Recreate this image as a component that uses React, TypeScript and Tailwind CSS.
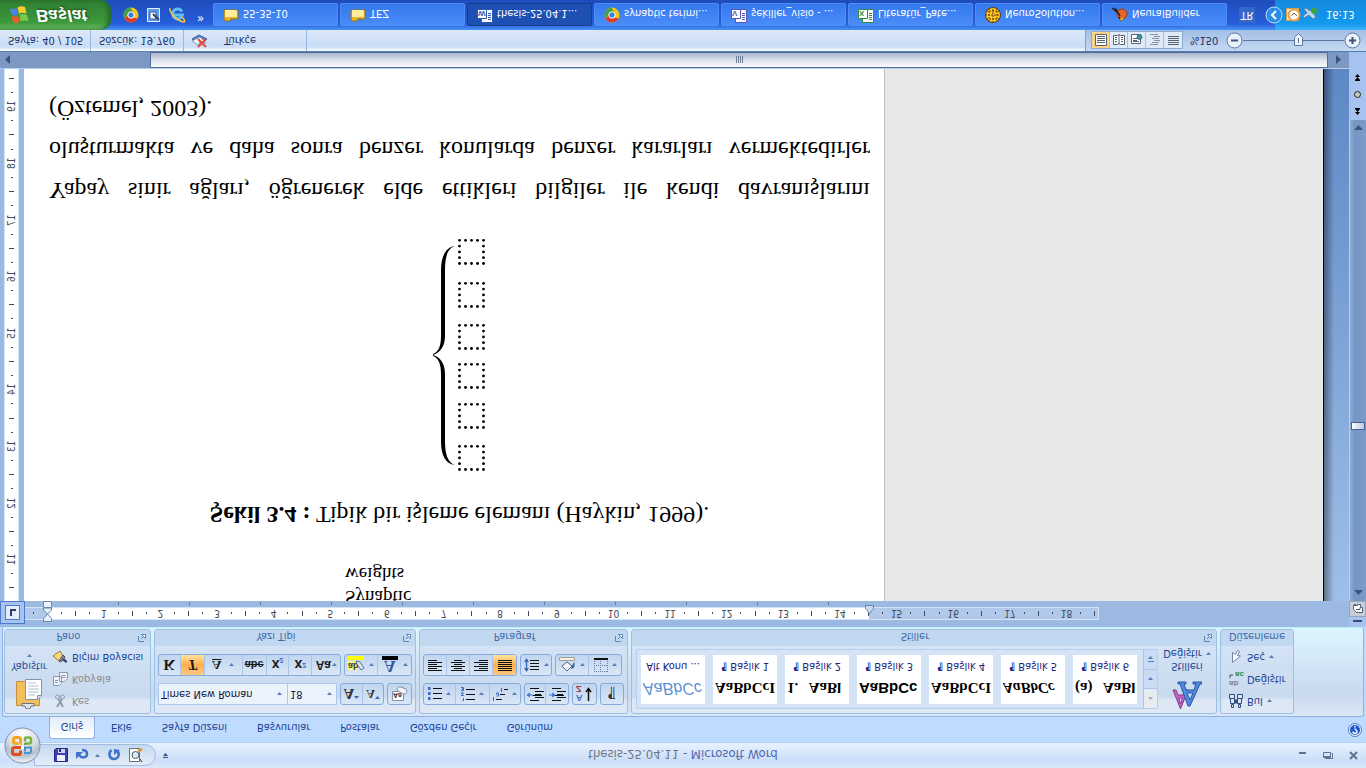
import React from 'react';

const GALLERY = [
  { label: 'Alt Konu ...', preview: 'AaBbCc', style: 'font-["Liberation_Sans"] italic text-[#5b8fd0] text-base' },
  { label: '¶ Başlık 1', preview: 'AaBbCcI', style: 'font-["Liberation_Serif"] font-bold text-[15px]' },
  { label: '¶ Başlık 2', preview: '1.   AaBl', style: 'font-["Liberation_Serif"] font-bold text-[15px]' },
  { label: '¶ Başlık 3', preview: 'AaBbCc', style: 'font-["Liberation_Sans"] font-bold text-[15px]' },
  { label: '¶ Başlık 4', preview: 'AaBbCcI', style: 'font-["Liberation_Serif"] font-bold text-[15px]' },
  { label: '¶ Başlık 5', preview: 'AaBbCc', style: 'font-["Liberation_Serif"] font-bold italic text-[15px]' },
  { label: '¶ Başlık 6', preview: '(a)   AaBl', style: 'font-["Liberation_Serif"] font-bold text-[15px]' },
];

const TABS = ['Ekle', 'Sayfa Düzeni', 'Başvurular', 'Postalar', 'Gözden Geçir', 'Görünüm'];

function Caret({ up = false, color = '#5b7fb8' }: { up?: boolean; color?: string }) {
  return (
    <svg width="5" height="3" viewBox="0 0 5 3" className="shrink-0">
      <path d={up ? 'M0 3h5L2.5 0z' : 'M0 0h5L2.5 3z'} fill={color} />
    </svg>
  );
}

function Segment({ children }: { children: React.ReactNode }) {
  return (
    <div className="flex h-[22px] divide-x divide-[#a9c5e8] overflow-hidden rounded-[3px] border border-[#86abdb] bg-linear-to-b from-[#d9e7f7] to-[#c0d5ef]">
      {children}
    </div>
  );
}

function Tool({ label, width = 'w-[23px]', active = false, caret = false, children }: {
  label: string; width?: string; active?: boolean; caret?: boolean; children: React.ReactNode;
}) {
  return (
    <button
      aria-label={label}
      className={`flex h-full items-center justify-center gap-1 ${width} ${active ? 'bg-linear-to-b from-[#fdc982] via-[#ffae4e] to-[#fde59b]' : ''}`}
    >
      {children}
      {caret && <Caret />}
    </button>
  );
}

function Group({ title, launcher = true, className = '', children }: {
  title: string; launcher?: boolean; className?: string; children: React.ReactNode;
}) {
  return (
    <section className={`flex h-[85px] shrink-0 flex-col overflow-hidden rounded-[3px] border border-[#9dbfe0] bg-linear-to-b from-[#dee8f5] from-15% via-[#c9daef] via-20% to-[#d7e6f7] ${className}`}>
      <div className="flex-1">{children}</div>
      <div className="flex h-[16px] items-center bg-[#c1d8f0] px-1 text-[#3e6aaa]">
        <span className={`flex-1 pt-[3px] text-center ${launcher ? 'pr-[10px]' : ''}`}>{title}</span>
        {launcher && (
          <button aria-label={`${title} ayarları`}>
            <svg width="8" height="8" viewBox="0 0 8 8" fill="none" stroke="#5c86b8">
              <path d="M.5 6V.5H6" />
              <path d="M7.5 3.5v4h-4zM3 3l3 3" fill="#fff" />
            </svg>
          </button>
        )}
      </div>
    </section>
  );
}

// Horizontal lines used by the alignment and list buttons
function Lines({ rows }: { rows: number[][] }) {
  return (
    <svg width="16" height="14" viewBox="0 0 16 14" shapeRendering="crispEdges">
      {rows.map(([x, w], i) => <rect key={i} x={x} y={1 + i * 2} width={w} height="1" fill="#111" />)}
    </svg>
  );
}

function OfficeOrb() {
  return (
    <button aria-label="Office Düğmesi" className="absolute left-1 top-1 z-10">
      <svg width="37" height="37" viewBox="0 0 37 37">
        <defs>
          <radialGradient id="orb" cx="50%" cy="85%" r="85%">
            <stop offset="0" stopColor="#fff" />
            <stop offset=".55" stopColor="#d5dbe4" />
            <stop offset=".75" stopColor="#b5bfcd" />
            <stop offset="1" stopColor="#f4f7fb" />
          </radialGradient>
        </defs>
        <circle cx="18.500" cy="18.500" r="17.500" fill="url(#orb)" stroke="#7d8fa8" />
        <g fill="none" strokeWidth="3">
          <path d="M17 16.500h-6.500a2 2 0 0 1-2-2v-3a2 2 0 0 1 2-2h4a2 2 0 0 1 2 2v2" stroke="#e0501c" />
          <path d="M20 11h5a2 2 0 0 1 2 2v3.500h-6v-4" stroke="#4a94cf" strokeWidth="2" />
          <path d="M16.500 20.500v4a2 2 0 0 1-2 2h-3a2 2 0 0 1-2-2v-2a2 2 0 0 1 2-2h3" stroke="#f5a51f" />
          <path d="M21 20.500h4a2 2 0 0 1 2 2v2a2 2 0 0 1-2 2h-3a1 1 0 0 1-1-1v-3" stroke="#7fb342" strokeWidth="2.500" />
        </g>
        <path d="M17 15h3v3h-3z" fill="#fff" />
        <path d="M16 19h2v2h-2z" fill="#f0b030" />
        <path d="M20 19h2v2h-2z" fill="#68a43a" />
        <path d="M20 15h2v2h-2z" fill="#3f86c7" />
      </svg>
    </button>
  );
}

function TitleBar() {
  return (
    <header className="flex h-[26px] items-center border-b border-[#b1d0f5] bg-linear-to-b from-[#dbe9fb] via-[#cbdef7] via-30% to-[#e7f2ff]">
      <div className="ml-[34px] flex h-[22px] w-[122px] shrink-0 items-center rounded-r-full border border-[#a2bddf] bg-linear-to-b from-[#e3edf9] to-[#c6d9f1] pl-[19px]">
        <button aria-label="Kaydet">
          <svg width="14" height="14" viewBox="0 0 14 14">
            <path d="M.5.500h13v13H2l-1.500-1.500z" fill="#3e3fb5" stroke="#25267c" />
            <path d="M3 1h8v6H3z" fill="#eceffc" />
            <path d="M4 9h7v4H4z" fill="#cfd4ee" />
            <path d="M5 10h2v3H5z" fill="#25267c" />
          </svg>
        </button>
        <button aria-label="Geri Al" className="ml-[7px]">
          <svg width="14" height="14" viewBox="0 0 14 14" fill="none">
            <path d="M4 7c3-4 8-2.500 8 1 0 2.500-2 4-5 4" stroke="#4173c8" strokeWidth="2.500" />
            <path d="M1 3v7h7z" fill="#4173c8" />
          </svg>
        </button>
        <span className="ml-[6px]"><Caret /></span>
        <button aria-label="Yinele" className="ml-[7px]">
          <svg width="14" height="14" viewBox="0 0 14 14" fill="none">
            <path d="M4.500 12C1 9 2 3 7 3s6 6 3 8" stroke="#4173c8" strokeWidth="2.500" />
            <path d="M7 13V7l6 5z" fill="#4173c8" />
          </svg>
        </button>
        <button aria-label="Baskı Önizleme" className="ml-[7px]">
          <svg width="16" height="16" viewBox="0 0 16 16" fill="none">
            <path d="M1.500 1.500h10v13h-10z" fill="#fff" stroke="#6d6f79" />
            <circle cx="7.500" cy="8" r="3.500" fill="#d8e9f7" stroke="#51565f" />
            <path d="M10 12l4 2" stroke="#e0963c" strokeWidth="3" />
            <path d="M12 4l2-3" stroke="#403020" />
          </svg>
        </button>
      </div>
      <button aria-label="Hızlı Erişim" className="ml-[7px] flex flex-col items-center gap-px">
        <span className="h-px w-[5px] bg-[#31508a]" />
        <Caret color="#31508a" />
      </button>
      <h1 className="flex-1 pr-[100px] pt-[3px] text-center text-[13px] text-[#5468ac]">
        <span className="text-[#707684]">thesis-25.04.11</span> - Microsoft Word
      </h1>
      <div className="flex w-[68px] items-center gap-4 text-[#5c7394]">
        <button aria-label="Simge Durumuna Küçült">
          <svg width="9" height="9" viewBox="0 0 9 9"><path d="M1 6h7v2H1z" fill="currentColor" /></svg>
        </button>
        <button aria-label="Önceki Boyut">
          <svg width="10" height="9" viewBox="0 0 10 9" fill="none" stroke="currentColor"><path d="M2.500 2.500v-1h7v5h-1M.5 2.500h7v5h-7zM.5 3.500h7" /></svg>
        </button>
        <button aria-label="Kapat">
          <svg width="10" height="9" viewBox="0 0 10 9" stroke="currentColor" strokeWidth="2"><path d="M1 1l7 7M8 1L1 8" /></svg>
        </button>
      </div>
    </header>
  );
}

function RibbonTabs() {
  return (
    <nav className="flex h-[25px] items-end bg-[#bfdbff] pl-[49px] text-[#1c4494]">
      <button className="h-[22px] w-[46px] rounded-t-[3px] border border-b-0 border-[#8db2e3] bg-linear-to-b from-white to-[#e2ecf8] pt-[2px]">Giriş</button>
      <div className="flex flex-1 pl-px">
        {TABS.map(tab => <button key={tab} className="h-[22px] px-[15px] pt-[2px]">{tab}</button>)}
      </div>
      <button aria-label="Yardım" className="mr-1 mb-[6px]">
        <svg width="14" height="14" viewBox="0 0 14 14">
          <circle cx="7" cy="7" r="6.500" fill="#e8f3ff" stroke="#4a7dc8" />
          <circle cx="7" cy="7" r="5" fill="#1f57c8" />
          <path d="M5 5.500c0-2.500 4-2.500 4 0C9 7 7 7 7 8.500M7 9.500v1.500" stroke="#fff" strokeWidth="1.500" fill="none" />
        </svg>
      </button>
    </nav>
  );
}

function ClipboardGroup() {
  return (
    <Group title="Pano" className="w-[147px]">
      <div className="flex">
        <button className="flex w-[48px] flex-col items-center pt-1 text-[#2b4f96]">
          <svg width="28" height="31" viewBox="0 0 28 31">
            <path d="M1.500 3.500h23v24h-23z" fill="#f3bf5d" stroke="#c48f3a" />
            <path d="M7 5.500h12V3h-3a3 3 0 0 0-6 0H7z" fill="#dfe3ea" stroke="#6f7683" />
            <path d="M10.500 9.500h12l4 4v16h-16z" fill="#fff" stroke="#8292a8" />
            <path d="M22.500 9.500v4h4" fill="#d5dfee" stroke="#8292a8" />
            <path d="M13 14h7M13 17h11M13 20h11M13 23h11M13 26h8" stroke="#b2bfd0" />
          </svg>
          <span className="mt-[3px] leading-[18px]">Yapıştır</span>
          <Caret />
        </button>
        <div className="flex flex-col pt-px text-[#8d8d8d]">
          <button className="flex h-[22px] items-center gap-1">
            <svg width="15" height="14" viewBox="0 0 15 14" fill="none" stroke="#8c9bb2">
              <path d="M4 1l5 8M10 1L5.500 9" strokeWidth="2" />
              <circle cx="4.500" cy="11" r="2" /><circle cx="9.500" cy="11" r="2" />
            </svg>
            Kes
          </button>
          <button className="flex h-[22px] items-center gap-1">
            <svg width="15" height="14" viewBox="0 0 15 14" fill="#eef2f8" stroke="#8c9bb2">
              <path d="M.5.500h6l2 2v7h-8zM6.500 4.500h5l3 3v6h-8z" />
              <path d="M2 3.500h3M2 5.500h3M8.500 8.500h4M8.500 10.500h4" />
            </svg>
            Kopyala
          </button>
          <button className="flex h-[22px] items-center gap-1 text-[#1c4494]">
            <svg width="15" height="14" viewBox="0 0 15 14">
              <path d="M0 8l6-5 4 5-3 5z" fill="#f6dc79" stroke="#94793a" />
              <path d="M6 3l2-1 4 5-2 2z" fill="#8b8ba0" stroke="#4d4d60" />
              <path d="M9 4l4-3 1.500 1.500L11 6z" fill="#3f4270" />
            </svg>
            Biçim Boyacısı
          </button>
        </div>
      </div>
    </Group>
  );
}

function FontGroup() {
  return (
    <Group title="Yazı Tipi" className="w-[262px]">
      <div className="flex flex-col gap-[7px] px-[3px] pt-2">
        <div className="flex gap-[3px]">
          <div className="flex text-[#14143c]">
            <div className="relative">
              <select aria-label="Yazı tipi" className="h-[22px] w-[130px] appearance-none border border-[#abc7ec] bg-[#eaf2fb] pl-[2px]">
                <option>Times New Roman</option>
              </select>
              <span className="pointer-events-none absolute right-[6px] top-[10px]"><Caret /></span>
            </div>
            <div className="relative">
              <select aria-label="Yazı tipi boyutu" className="h-[22px] w-[49px] appearance-none border border-l-0 border-[#abc7ec] bg-[#eaf2fb] pl-[2px]">
                <option>18</option>
              </select>
              <span className="pointer-events-none absolute right-[5px] top-[10px]"><Caret /></span>
            </div>
          </div>
          <Segment>
            <Tool label="Yazı Tipini Büyüt" width="w-[22px]">
              <span className="font-['Liberation_Serif'] text-[15px] font-bold leading-4 text-[#333]">A</span>
              <span className="-ml-1 mb-2"><Caret up color="#3c68b0" /></span>
            </Tool>
            <Tool label="Yazı Tipini Küçült" width="w-[21px]">
              <span className="font-['Liberation_Serif'] text-xs font-bold leading-4 text-[#333]">A</span>
              <span className="-ml-1 mb-2"><Caret color="#3c68b0" /></span>
            </Tool>
          </Segment>
          <Segment>
            <Tool label="Biçimlendirmeyi Temizle">
              <svg width="18" height="18" viewBox="0 0 18 18">
                <path d="M1.500 2.500h11v9h-11z" fill="#fff" stroke="#8492ab" />
                <text x="2" y="10" fontSize="7" fontWeight="bold" fontFamily="Liberation Sans" fill="#334">Aa</text>
                <path d="M7 12l5-3c3-1 5 3 3 5l-5 2c-3 1-5-2-3-4z" fill="#eff2f7" stroke="#7c8aa6" />
              </svg>
            </Tool>
          </Segment>
        </div>
        <div className="flex gap-[3px] font-['Liberation_Serif'] text-[15px] font-bold leading-4 text-[#1a1a1a]">
          <Segment>
            <Tool label="Kalın" width="w-[22px]"><span>K</span></Tool>
            <Tool label="İtalik" width="w-6" active><span className="italic">T</span></Tool>
            <Tool label="Altı Çizili" width="w-[38px]" caret><span className="mr-1 text-[13px] underline">A</span></Tool>
            <Tool label="Üstü Çizili" width="w-6"><span className="font-['Liberation_Sans'] text-[11px] line-through">abe</span></Tool>
            <Tool label="Alt Simge"><span className="font-['Liberation_Sans'] text-sm">x<sub className="text-[7px] text-[#3c68c0]">2</sub></span></Tool>
            <Tool label="Üst Simge"><span className="font-['Liberation_Sans'] text-sm">x<sup className="text-[7px] text-[#3c68c0]">2</sup></span></Tool>
            <Tool label="Büyük/Küçük Harf" width="w-[28px]" caret><span className="-mr-[3px] font-['Liberation_Sans'] text-xs">Aa</span></Tool>
          </Segment>
          <Segment>
            <Tool label="Vurgu Rengi" width="w-[33px]" caret>
              <svg width="17" height="18" viewBox="0 0 17 18">
                <path d="M0 4h10v9H0z" fill="#fbf77a" />
                <text x="0" y="11" fontSize="9" fontWeight="bold" fontFamily="Liberation Sans" fill="#333">ab</text>
                <path d="M9 10l4-6 3 2-4 6-4 1z" fill="#dce6f5" stroke="#5b6f95" />
                <path d="M0 14h16v4H0z" fill="#ff0" />
              </svg>
            </Tool>
            <Tool label="Yazı Tipi Rengi" width="w-[33px]" caret>
              <svg width="17" height="18" viewBox="0 0 17 18">
                <text x="2" y="13" fontSize="16" fontWeight="bold" fontFamily="Liberation Serif" fill="#31599f">A</text>
                <path d="M0 14h16v4H0z" fill="#000" />
              </svg>
            </Tool>
          </Segment>
        </div>
      </div>
    </Group>
  );
}

function ParagraphGroup() {
  return (
    <Group title="Paragraf" className="w-[209px]">
      <div className="flex flex-col gap-[7px] px-[3px] pt-2">
        <div className="flex gap-[3px]">
          <Segment>
            <Tool label="Madde İşaretleri" width="w-[33px]" caret>
              <svg width="14" height="13" viewBox="0 0 14 13" stroke="#111"><path d="M5 1.500h9M5 6.500h9M5 11.500h9" /><path d="M0 1.500h2.500M0 6.500h2.500M0 11.500h2.500" stroke="#3c68c0" strokeWidth="3" /></svg>
            </Tool>
            <Tool label="Numaralandırma" width="w-[34px]" caret>
              <svg width="14" height="14" viewBox="0 0 14 14" stroke="#111"><path d="M5 1.500h9M5 6.500h9M5 11.500h9" /><path d="M1 0h1.500v3M0 5.500h2.500L0 8h3M0 10.500h2.500v1.500H1h1.500v1.500H0" stroke="#3c68c0" fill="none" /></svg>
            </Tool>
            <Tool label="Çok Düzeyli Liste" width="w-[31px]" caret>
              <svg width="16" height="14" viewBox="0 0 16 14" stroke="#111"><path d="M4 1.500h6M8 6.500h5M12 11.500h4" /><path d="M1.500 0v4M4.500 5h2v3h-2V6.500M9.500 9v4" stroke="#3c68c0" fill="none" /></svg>
            </Tool>
          </Segment>
          <Segment>
            {['Girintiyi Azalt', 'Girintiyi Artır'].map((label, i) => (
              <Tool key={label} label={label} width="w-[22px]">
                <svg width="17" height="14" viewBox="0 0 17 14" stroke="#111">
                  <path d="M3 .5h9M8 3.500h9M8 6.500h6M8 9.500h9M3 12.500h9M6 5.500h9" />
                  <path d={i ? 'M0 6h5M3 4l3 2-3 2' : 'M1 6h5M3 4L0 6l3 2'} stroke="#3c78d0" fill="#3c78d0" />
                </svg>
              </Tool>
            ))}
          </Segment>
          <Segment>
            <Tool label="Sırala">
              <svg width="16" height="18" viewBox="0 0 16 18" fill="none">
                <text x="0" y="8" fontSize="9" fontWeight="bold" fontFamily="Liberation Sans" fill="#3c68c0">A</text>
                <text x="0" y="17" fontSize="9" fontWeight="bold" fontFamily="Liberation Sans" fill="#a03848">Z</text>
                <path d="M12.500 2v12M10 11l2.500 3.500L15 11" stroke="#111" strokeWidth="1.500" />
              </svg>
            </Tool>
          </Segment>
          <Segment>
            <Tool label="Tümünü Göster"><span className="font-['Liberation_Sans'] text-[15px] leading-4 text-[#333]">¶</span></Tool>
          </Segment>
        </div>
        <div className="flex gap-[3px]">
          <Segment>
            <Tool label="Sola Hizala"><Lines rows={[[1, 14], [1, 9], [1, 14], [1, 9], [1, 14], [1, 9]]} /></Tool>
            <Tool label="Ortala"><Lines rows={[[1, 14], [4, 8], [1, 14], [4, 8], [1, 14], [4, 8]]} /></Tool>
            <Tool label="Sağa Hizala"><Lines rows={[[1, 14], [6, 9], [1, 14], [6, 9], [1, 14], [6, 9]]} /></Tool>
            <Tool label="İki Yana Yasla" active><Lines rows={[[1, 14], [1, 14], [1, 14], [1, 14], [1, 14], [1, 14]]} /></Tool>
          </Segment>
          <Segment>
            <Tool label="Satır Aralığı" width="w-[30px]" caret>
              <svg width="16" height="16" viewBox="0 0 16 16"><path d="M6 3.500h9M6 6.500h9M6 9.500h9M6 12.500h9" stroke="#111" /><path d="M2.500 2v12" stroke="#3c68c0" strokeWidth="1.500" /><path d="M0 5l2.500-4L5 5zM0 11l2.500 4L5 11z" fill="#3c68c0" /></svg>
            </Tool>
          </Segment>
          <Segment>
            <Tool label="Gölgelendirme" width="w-[33px]" caret>
              <svg width="17" height="16" viewBox="0 0 17 16"><path d="M3 7l5-5 5 5-5 4z" fill="#f3f6fb" stroke="#56688a" /><path d="M12 4c4 1 4 4 3 7l-2-4z" fill="#2f5ea8" /><path d="M.5 12.500h15v3H.5z" fill="#f5f1e4" stroke="#a39f90" /></svg>
            </Tool>
            <Tool label="Kenarlıklar" width="w-[32px]" caret>
              <svg width="14" height="14" viewBox="0 0 14 14" stroke="#6d7ea0" strokeDasharray="1 1"><path d="M.5 0v13M13.500 0v13M6.500 0v13M0 .5h14M0 6.500h14" /><path d="M0 13h14" stroke="#111" strokeWidth="2" strokeDasharray="none" /></svg>
            </Tool>
          </Segment>
        </div>
      </div>
    </Group>
  );
}

function StylesGroup() {
  return (
    <Group title="Stiller" className="w-[586px]">
      <div className="flex gap-[3px] pl-1 pt-1">
        <div className="flex h-[60px] w-[522px] rounded-[2px] border border-[#b5cfee] bg-[#d4e4f6]">
          <div className="flex flex-1 gap-2 overflow-hidden pl-1 pt-1">
            {GALLERY.map(item => (
              <button key={item.label} className="flex h-[49px] w-16 shrink-0 flex-col bg-white px-[2px] pt-[6px] text-left text-black">
                <span className={`h-[22px] w-full overflow-hidden whitespace-pre leading-5 ${item.style}`}>{item.preview}</span>
                <span className="w-full whitespace-nowrap text-center leading-[20px] text-[#20207c]">{item.label}</span>
              </button>
            ))}
          </div>
          <div className="flex w-[14px] flex-col divide-y divide-[#a9c5e8] border-l border-[#a9c5e8] text-[#5b7fb8]">
            <button aria-label="Önceki satır" className="flex flex-1 items-center justify-center bg-[#e8ecf1]"><Caret up color="#a5aab2" /></button>
            <button aria-label="Sonraki satır" className="flex flex-1 items-center justify-center bg-[#c9dcf4]"><Caret /></button>
            <button aria-label="Diğer stiller" className="flex flex-1 flex-col items-center justify-center gap-[2px] bg-[#c9dcf4]">
              <span className="h-px w-[6px] bg-[#5b7fb8]" />
              <Caret />
            </button>
          </div>
        </div>
        <button className="flex w-[52px] flex-col items-center text-[#1c4494]">
          <svg width="30" height="28" viewBox="0 0 30 28">
            <path d="M8.500 1L1 20h3l2-5h5l2 5h3z M8.500 6l2 6H7z" transform="translate(0 -1)" fill="#c264c4" stroke="#8c3a94" fillRule="evenodd" />
            <path d="M16 3L8 25H6v2h8v-2h-2l2-6h8l2 6h-3v2h9v-2h-2L18 3z M18 9l3 7h-6z" fill="#4f8ade" stroke="#2a57a5" fillRule="evenodd" />
          </svg>
          <span className="mt-2 leading-[13px]">Stilleri</span>
          <span className="flex items-center gap-1 leading-[13px]">Değiştir <Caret /></span>
        </button>
      </div>
    </Group>
  );
}

function EditingGroup() {
  return (
    <Group title="Düzenleme" launcher={false} className="w-[74px]">
      <div className="flex flex-col pl-2 pt-px text-[#1c4494]">
        <button className="flex h-[22px] items-center gap-1">
          <svg width="14" height="14" viewBox="0 0 14 14" fill="#dce7f6" stroke="#2c4d84">
            <path d="M2.500.500h2v3h-2zM9.500.500h2v3h-2zM1.500 4.500h4v5h-4zM8.500 4.500h4v5h-4zM.5 9.500h5v4h-5zM8.500 9.500h5v4h-5z" />
            <path d="M6 5h2v3H6z" fill="#2c4d84" />
          </svg>
          Bul <Caret />
        </button>
        <button className="flex h-[22px] items-center gap-[3px]">
          <svg width="15" height="16" viewBox="0 0 15 16">
            <text x="0" y="6" fontSize="8" fontWeight="bold" fontFamily="Liberation Sans" fill="#7b8390">ab</text>
            <text x="6" y="15" fontSize="8" fontWeight="bold" fontFamily="Liberation Sans" fill="#2f8c3c">ac</text>
            <path d="M1 9v3h3" stroke="#445" fill="none" />
          </svg>
          Değiştir
        </button>
        <button className="flex h-[22px] items-center gap-1">
          <svg width="14" height="15" viewBox="0 0 14 15"><path d="M3.500 1.500v10l3-2 2 4 2-1-2-4 3-.5z" fill="#fff" stroke="#6f86a8" /></svg>
          Seç <Caret />
        </button>
      </div>
    </Group>
  );
}

function HorizontalRuler() {
  // one entry per quarter centimetre, starting just left of zero
  const marks = Array.from({ length: 76 }, (_, i) => i - 1);
  return (
    <div className="flex h-[26px] shrink-0 bg-[#9bb9e1]">
      <button aria-label="Sekme türü" className="mt-[3px] flex h-[23px] w-[25px] shrink-0 items-center justify-center border border-[#4a7ad0] bg-[#a9c4ec]">
        <span className="flex h-[15px] w-[15px] items-center justify-center border border-[#4a7ad0] bg-[#e4eefb]">
          <span className="h-[7px] w-[6px] border-b-2 border-l-2 border-[#2c3e66]" />
        </span>
      </button>
      <div className="relative mt-[7px]">
        <div className="h-[13px] w-[1074px] overflow-hidden border-y border-r border-[#d3e2f6] bg-[linear-gradient(to_right,#b0c9ea_22px,#fff_22px,#fff_844px,#b0c9ea_844px)]">
          <div className="flex h-full w-[1077px] items-center pl-px text-[10px] leading-3 text-[#404a5c]">
            {marks.map(m => (
              <span key={m} className="flex h-full flex-1 basis-0 items-center justify-center overflow-visible">
                {m === 0 ? null : m % 4 === 0 ? <span className="-mx-1">{m / 4}</span>
                  : m % 2 === 0 ? <span className="h-[5px] w-px bg-[#404a5c]" />
                  : <span className="h-[2px] w-px bg-[#404a5c]" />}
              </span>
            ))}
          </div>
        </div>
        <div className="mt-[2px] ml-[93px] flex">
          {Array.from({ length: 11 }, (_, i) => <span key={i} className="h-[3px] w-[71px] shrink-0 border-l border-[#6b7f9c]" />)}
        </div>
        <svg className="absolute left-[18px] -top-[2px]" width="9" height="22" viewBox="0 0 9 22" fill="#e9f1fb" stroke="#6b87b0">
          <path d="M.5.500h8v3l-4 4.500-4-4.500zM4.500 8l4 4v2h-8v-2zM.5 14.500h8v6h-8z" />
        </svg>
        <svg className="absolute left-[840px] top-[6px]" width="9" height="9" viewBox="0 0 9 9" fill="#c9daf2" stroke="#6b87b0">
          <path d="M.5 8.500h8v-3L4.500.500l-4 5z" />
        </svg>
      </div>
    </div>
  );
}

function VerticalRuler() {
  const marks = Array.from({ length: 37 }, (_, i) => i + 42);
  return (
    <div className="flex w-6 shrink-0 justify-center bg-[#9bb9e1] pr-px">
      <div className="flex w-[15px] flex-col border-x border-[#d3e2f6] bg-white pb-[2px] pt-[6px] text-[10px] leading-3 text-[#404a5c]">
        {marks.map(m => (
          <span key={m} className="flex flex-1 basis-0 items-center justify-center">
            {m % 4 === 0 ? <span className="-my-1 rotate-180 [writing-mode:vertical-rl]">{m / 4}</span>
              : m % 2 === 0 ? <span className="h-px w-[5px] bg-[#404a5c]" />
              : <span className="h-px w-[2px] bg-[#404a5c]" />}
          </span>
        ))}
      </div>
    </div>
  );
}

const BOX_TOPS = [1, 43, 83, 122, 164, 207];

function Figure() {
  return (
    <svg className="mx-auto mt-[22px] block" width="54" height="235" viewBox="0 0 54 235">
      <path d="M22 7C15 9 12 18 12 30v68c0 11-5 17-12 19 7 2 12 9 12 19v66c0 14 3 22 10 24-10-1-14-12-14-24v-66c0-9-2-16-8-18v-2c6-2 8-9 8-18V30C8 18 12 8 22 7z" />
      {BOX_TOPS.map(top => (
        <g key={top}>
          {[0, 1, 2, 3, 4].flatMap(r => [0, 1, 2, 3, 4].filter(c => r === 0 || r === 4 || c === 0 || c === 4).map(c => (
            <circle key={`${r}${c}`} cx={26.5 + c * 6} cy={top + 1.5 + r * 5.8} r="1.4" />
          )))}
        </g>
      ))}
    </svg>
  );
}

function Document() {
  return (
    <main className="flex min-h-0 flex-1 overflow-hidden">
      <VerticalRuler />
      <article className="w-[861px] shrink-0 overflow-hidden border-r border-[#bfbfbf] bg-white pl-[25px] pr-[14px] font-['Liberation_Serif',serif] text-2xl leading-[41px] text-black">
        <p className="-mt-2 pl-[296px] text-[19px] leading-[23px]">Synaptic<br />weights</p>
        <p className="mt-7 text-center"><b>Şekil 3.4 :</b> Tipik bir işleme elemanı (Haykin, 1999).</p>
        <Figure />
        <p className="mt-[26px] [text-align-last:justify]">Yapay sinir ağları, öğrenerek elde ettikleri bilgiler ile kendi davranışlarını</p>
        <p className="[text-align-last:justify]">oluşturmakta ve daha sonra benzer konularda benzer kararları vermektedirler</p>
        <p>(Öztemel, 2003).</p>
      </article>
      <div className="flex-1 border-r border-black bg-[#e8e8e8]" />
      <div className="w-[25px] bg-linear-to-b from-[#9fbfe8] to-[#5d88c4]">
        <div className="h-full w-[10px] bg-linear-to-r from-black/40 to-transparent" />
      </div>
    </main>
  );
}

function HorizontalScroll() {
  return (
    <div className="flex h-[17px] shrink-0 border-t border-[#b8d0f0] bg-[#7b99c3]">
      <button aria-label="Sola kaydır" className="flex w-[150px] shrink-0 items-center pl-[5px]">
        <svg width="5" height="9" viewBox="0 0 5 9"><path d="M5 0v9L0 4.500z" fill="#3f5378" /></svg>
      </button>
      <div className="flex flex-1 items-center justify-center gap-px border border-[#4f6c9c] bg-linear-to-b from-[#fbfcfe] via-[#dfe5ee] via-45% to-[#a9b6cb]">
        {[0, 1, 2, 3].map(i => <span key={i} className="h-[7px] w-px bg-[#6f7d95]" />)}
      </div>
      <button aria-label="Sağa kaydır" className="flex w-[21px] shrink-0 items-center justify-center">
        <svg width="5" height="9" viewBox="0 0 5 9"><path d="M0 0v9l5-4.500z" fill="#3f5378" /></svg>
      </button>
    </div>
  );
}

function VerticalScroll() {
  return (
    <div className="flex w-[17px] shrink-0 flex-col bg-[#a5c3ee] pt-[5px]">
      <span className="mx-auto h-[2px] w-[9px] bg-[#3a4c70]" />
      <button aria-label="Cetveli göster" className="mt-[3px] flex h-4 items-center justify-center border border-[#9aa6b8] bg-[#c8cdd8]">
        <svg width="12" height="11" viewBox="0 0 12 11" fill="#fff" stroke="#4c5b78"><path d="M1.500 4.500l3-3h6v5h-2v3h-3v-1h-4z" /><path d="M4 4.500h4v2M2 9.500h2" /></svg>
      </button>
      <div className="flex flex-1 flex-col items-center border-l border-[#b9cff0] bg-linear-to-r from-[#8fadd6] via-[#7496c4] via-30% to-[#7b9bc8]">
        <button aria-label="Yukarı kaydır" className="flex h-4 items-center"><svg width="9" height="5" viewBox="0 0 9 5"><path d="M0 5h9L4.500 0z" fill="#3f5378" /></svg></button>
        <div className="mt-[155px] h-2 w-[14px] border border-[#4c5f96] bg-linear-to-r from-white to-[#b9c9e0]" />
        <button aria-label="Aşağı kaydır" className="mt-auto flex h-4 items-center"><svg width="9" height="5" viewBox="0 0 9 5"><path d="M0 0h9L4.500 5z" fill="#3f5378" /></svg></button>
      </div>
      <div className="flex h-[68px] flex-col items-center">
        <button aria-label="Önceki sayfa" className="flex h-[17px] items-center"><svg width="7" height="7" viewBox="0 0 7 7"><path d="M1 3h5L3.500 0zM1 6h5L3.500 3zM1 6h5v1H1z" /></svg></button>
        <button aria-label="Gözatma nesnesi seç" className="flex h-[17px] items-center"><svg width="7" height="7" viewBox="0 0 7 7"><circle cx="3.500" cy="3.500" r="3" fill="#c8c8c8" stroke="#222" /></svg></button>
        <button aria-label="Sonraki sayfa" className="flex h-[17px] items-center"><svg width="7" height="7" viewBox="0 0 7 7"><path d="M1 1h5L3.500 4zM1 4h5L3.500 7zM1 0h5v1H1z" /></svg></button>
      </div>
    </div>
  );
}

const VIEWS = ['Sayfa Düzeni', 'Tam Ekran Okuma', 'Web Düzeni', 'Anahat', 'Taslak'];

function ViewIcon({ index }: { index: number }) {
  return (
    <svg width="12" height="12" viewBox="0 0 12 12" fill="none" stroke="#5a6270">
      {index === 0 && <><path d="M.5.500h11v11H.5z" fill="#fff" /><path d="M2 3.500h8M2 5.500h8M2 7.500h8M2 9.500h8" /></>}
      {index === 1 && <><path d="M.5 1.500h4l1.500 1 1.500-1h4v9h-4L6 11.500l-1.500-1h-4zM6 2v9" fill="#fff" /><path d="M2 4.500h2M2 6.500h2M2 8.500h2M8 4.500h2M8 6.500h2M8 8.500h2" /></>}
      {index === 2 && <><path d="M.5 2.500h9v9h-9z" fill="#fff" /><path d="M2 5.500h4M2 7.500h6M2 4.500h6" /><circle cx="8.500" cy="9" r="2.500" fill="#3c9a78" stroke="#3a6ec0" /></>}
      {index === 3 && <path d="M1 1.500h8M3 3.500h7M5 5.500h6M3 7.500h7M5 9.500h6M1 11.500h8" stroke="#8390a3" />}
      {index === 4 && <path d="M1 1.500h11M1 3.500h11M1 5.500h11M1 7.500h11M1 9.500h11" />}
    </svg>
  );
}

function StatusBar() {
  return (
    <footer className="flex h-[22px] shrink-0 border-t border-[#567db0] bg-linear-to-b from-white via-[#c9ddf7] via-20% to-[#dbe8f9] text-[#1c3468]">
      <button className="flex w-[91px] items-center border-r border-[#9ab7de] pl-2">Sayfa: 40 / 105</button>
      <button className="flex w-[93px] items-center border-r border-[#9ab7de] pl-2">Sözcük: 19.760</button>
      <button className="flex w-[123px] items-center gap-4 border-r border-[#9ab7de] pl-[7px]">
        <svg width="17" height="15" viewBox="0 0 17 15">
          <path d="M1 8l7 4 8-4-5-4z" transform="translate(0 1)" fill="#5c86c8" stroke="#3c5c98" />
          <path d="M1 7l6-4 2 3 6-1-6 6z" fill="#f2f6fc" stroke="#8398b8" />
          <path d="M7 1l8 8M15 1L7 9" stroke="#e04a3c" strokeWidth="2" />
        </svg>
        Türkçe
      </button>
      <div className="flex-1" />
      <div className="flex items-center border-l border-[#7f9fcc] bg-linear-to-b from-[#c5d9f3] to-[#a3bfe6] pl-[5px] pr-[5px]">
        <div className="flex h-[18px] divide-x divide-[#a9c0e0] border border-[#8aa9d4] bg-[#dfeaf8]">
          {VIEWS.map((view, i) => (
            <button key={view} aria-label={view} className={`flex w-[18px] items-center justify-center ${i === 0 ? 'bg-[#fbd488]' : ''}`}>
              <ViewIcon index={i} />
            </button>
          ))}
        </div>
        <span className="w-[37px] pl-[7px]">%150</span>
        <button aria-label="Uzaklaştır" className="ml-[6px]">
          <svg width="17" height="17" viewBox="0 0 17 17"><circle cx="8.500" cy="8.500" r="7.500" fill="#e9f1fc" stroke="#5d789f" /><path d="M5 8.500h7" stroke="#3f5578" strokeWidth="2" /></svg>
        </button>
        <div className="relative flex h-[17px] w-[101px] items-center bg-[linear-gradient(#5d789f,#5d789f)] bg-[length:100%_1px] bg-center bg-no-repeat">
          <input type="range" aria-label="Yakınlaştırma" min={0} max={100} defaultValue={56} className="w-full appearance-none bg-transparent opacity-0" />
          <svg className="pointer-events-none absolute left-[51px] top-[3px]" width="9" height="13" viewBox="0 0 9 13" fill="#eef4fc" stroke="#5d789f"><path d="M.5.500h8v8l-4 4-4-4zM4.500 3v5" /></svg>
        </div>
        <button aria-label="Yakınlaştır">
          <svg width="17" height="17" viewBox="0 0 17 17"><circle cx="8.500" cy="8.500" r="7.500" fill="#e9f1fc" stroke="#5d789f" /><path d="M5 8.500h7M8.500 5v7" stroke="#3f5578" strokeWidth="2" /></svg>
        </button>
      </div>
    </footer>
  );
}

function FolderIcon() {
  return (
    <svg width="16" height="14" viewBox="0 0 16 14"><path d="M1 3l1-2h5l1 2h7v9H1z" fill="#e9b52e" stroke="#94701c" /><path d="M2 5h12v6l-1 1H2z" fill="#ffef9c" /></svg>
  );
}

function ChromeIcon() {
  return (
    <svg width="16" height="16" viewBox="0 0 16 16">
      <circle cx="8" cy="8" r="7.500" fill="#f3c716" />
      <path d="M1.500 4.300A7.500 7.500 0 0 1 14.800 5H8a3 3 0 0 0-3 3z" fill="#dd3a2c" />
      <path d="M1.500 4.300A7.500 7.500 0 0 0 7.500 15.500L10.500 10A3.500 3.500 0 0 1 5 9z" fill="#43a047" />
      <circle cx="8" cy="8" r="3.200" fill="#3c7fe0" stroke="#fff" />
    </svg>
  );
}

function AppIcon({ color, letter }: { color: string; letter: string }) {
  return (
    <svg width="16" height="16" viewBox="0 0 16 16">
      <path d="M4.500.500h11v13h-11z" fill="#f6f9fd" stroke={color} />
      <path d="M11 3.500h3M11 5.500h3M11 7.500h3M11 9.500h3" stroke={color} />
      <path d="M.5 4.500h9v9h-9z" fill="#fff" stroke={color} />
      <text x="1" y="12" fontSize="8" fontWeight="bold" fontFamily="Liberation Sans" fill={color}>{letter}</text>
    </svg>
  );
}

const TASKS = [
  { title: '55-35-10', icon: <FolderIcon /> },
  { title: 'TEZ', icon: <FolderIcon /> },
  { title: 'thesis-25.04.1...', icon: <AppIcon color="#2f58b0" letter="W" />, active: true },
  { title: 'synaptic terimi...', icon: <ChromeIcon /> },
  { title: 'şekiller_visio - ...', icon: <AppIcon color="#5556b0" letter="V" /> },
  { title: 'Literatür_Pate...', icon: <AppIcon color="#2c8a3c" letter="X" /> },
  {
    title: 'NeuroSolution...',
    icon: <svg width="16" height="16" viewBox="0 0 16 16"><circle cx="8" cy="8" r="7.500" fill="#f2d21c" stroke="#5c3c10" /><path d="M4 1v14M8 0v16M12 1v14M1 4h14M0 8h16M1 12h14" stroke="#7c2c1c" strokeDasharray="2 1" /></svg>,
  },
  {
    title: 'NeuralBuilder',
    icon: <svg width="17" height="16" viewBox="0 0 17 16"><circle cx="11" cy="9" r="5" fill="#e8642c" stroke="#9c3010" /><path d="M1 15l6-5M4 15l5-8M8 6l2-4" stroke="#2a2010" strokeWidth="1.500" /><path d="M9 3l3 2" stroke="#f0b020" strokeWidth="2" /></svg>,
  },
];

function Taskbar() {
  return (
    <div className="flex h-[30px] shrink-0 bg-linear-to-b from-[#4a93f5] via-[#275edb] via-20% to-[#1f4cbb] text-white">
      <button className="flex w-[111px] shrink-0 items-center gap-[6px] rounded-r-[10px] bg-linear-to-b from-[#6fbf68] via-[#3c9a3c] via-25% to-[#2f7f30] pl-[10px] text-[17px] font-bold italic leading-5 shadow-[inset_-3px_0_4px_#24682a] [font-family:'Liberation_Sans'] [text-shadow:1px_1px_2px_#1c4a1c]">
        <svg width="20" height="18" viewBox="0 0 20 18">
          <path d="M3 2c2-1.500 4-1.500 6.500 0L8 8.500C6 7 4 7 1.500 8.500z" fill="#ee5a2c" />
          <path d="M10.500 2.500c2 1 5 1.500 8 0L17 9c-3 1.500-5 1-7.500 0z" fill="#7cc84a" />
          <path d="M1.500 9.500C4 8 6 8 8 9.500L6.500 16C4.500 14.500 2.500 14.500 0 16z" fill="#4c82e8" />
          <path d="M9 10c2 1.500 5 1.500 7.500.500L15 17c-3 1-5 1-7.500-.5z" fill="#f8cc30" />
        </svg>
        Başlat
      </button>
      <div className="flex w-[102px] shrink-0 items-center gap-[7px] pl-3">
        <button aria-label="Chrome"><ChromeIcon /></button>
        <button aria-label="Masaüstü">
          <svg width="16" height="16" viewBox="0 0 16 16"><path d="M1.500 1.500h12v13h-12z" fill="#5a9ae8" stroke="#e4effc" /><path d="M4 4h6v7H4z" fill="#fff" stroke="#2c5ca8" /><path d="M7 9l6-6" stroke="#3c3c50" strokeWidth="2" /></svg>
        </button>
        <button aria-label="Internet Explorer">
          <svg width="17" height="17" viewBox="0 0 17 17" fill="none"><path d="M13 11.500A5 5 0 1 1 13.500 8H5" stroke="#5cc0f8" strokeWidth="3" /><path d="M1 15C0 11 8 2 15 1c2 1-1 4-2 5" stroke="#f4c440" strokeWidth="1.500" /></svg>
        </button>
        <span className="mb-2 ml-1 text-[13px] leading-4">»</span>
      </div>
      <div className="flex min-w-0 flex-1 items-center gap-[2px]">
        {TASKS.map(task => (
          <button
            key={task.title}
            className={`flex h-[23px] min-w-0 max-w-[125px] flex-1 items-center gap-1 rounded-[2px] border pl-2 whitespace-nowrap ${task.active ? 'border-[#163c8c] bg-[#1e50b4]' : 'border-[#4f8ef6] bg-linear-to-b from-[#4a8cf8] to-[#3478ee]'}`}
          >
            <span className="flex w-[17px] shrink-0 justify-center">{task.icon}</span>
            <span className="pt-[3px]">{task.title}</span>
          </button>
        ))}
      </div>
      <div className="flex w-9 shrink-0 items-center justify-center"><span className="bg-[#3468c8] px-[2px] leading-4">TR</span></div>
      <div className="flex w-[101px] shrink-0 items-center">
        <button aria-label="Gizli simgeleri göster" className="z-10 -mr-2">
          <svg width="18" height="18" viewBox="0 0 18 18"><circle cx="9" cy="9" r="8" fill="#2c8ce8" stroke="#bfe0fb" /><path d="M11 5L7 9l4 4" fill="none" stroke="#fff" strokeWidth="2" /></svg>
        </button>
        <div className="flex h-full flex-1 items-center bg-linear-to-b from-[#3cb4f8] via-[#129aee] via-20% to-[#1588dc] pl-[10px]">
          <svg width="16" height="16" viewBox="0 0 16 16"><path d="M1.500 2.500h12v12h-12z" fill="#f8e8cc" stroke="#d89848" /><circle cx="9" cy="8" r="5.500" fill="#fff" stroke="#e8a040" strokeWidth="2" /><path d="M6.500 7L9 10l3-3" stroke="#7c6040" fill="none" /></svg>
          <svg className="ml-[2px]" width="16" height="16" viewBox="0 0 16 16"><path d="M1 5l5 3 4-4 3 2-3 4 4 4-4 1-3-3-4 3-2-1 3-4-4-3z" fill="#b9d8f0" stroke="#5c84a8" /><circle cx="11" cy="12" r="3" fill="#3ca83c" /></svg>
          <time className="ml-[7px] pt-px">16:13</time>
        </div>
      </div>
    </div>
  );
}

export default function App() {
  return (
    <div className="relative flex h-screen -scale-y-100 flex-col overflow-hidden bg-[#bfdbff] text-[11px] leading-[14px] [font-family:'DejaVu_Sans_Condensed','DejaVu_Sans',sans-serif]">
      <OfficeOrb />
      <TitleBar />
      <RibbonTabs />
      <div className="mx-[2px] flex h-[90px] shrink-0 gap-[3px] rounded-[3px] border border-[#8db2e3] border-b-[#b8f0fb] bg-linear-to-b from-[#dbe6f4] via-[#c9daf0] via-25% to-[#def5ff] px-px pt-[2px]">
        <ClipboardGroup />
        <FontGroup />
        <ParagraphGroup />
        <StylesGroup />
        <EditingGroup />
      </div>
      <div className="flex min-h-0 flex-1">
        <div className="flex min-w-0 flex-1 flex-col">
          <HorizontalRuler />
          <Document />
          <HorizontalScroll />
        </div>
        <VerticalScroll />
      </div>
      <StatusBar />
      <Taskbar />
    </div>
  );
}
